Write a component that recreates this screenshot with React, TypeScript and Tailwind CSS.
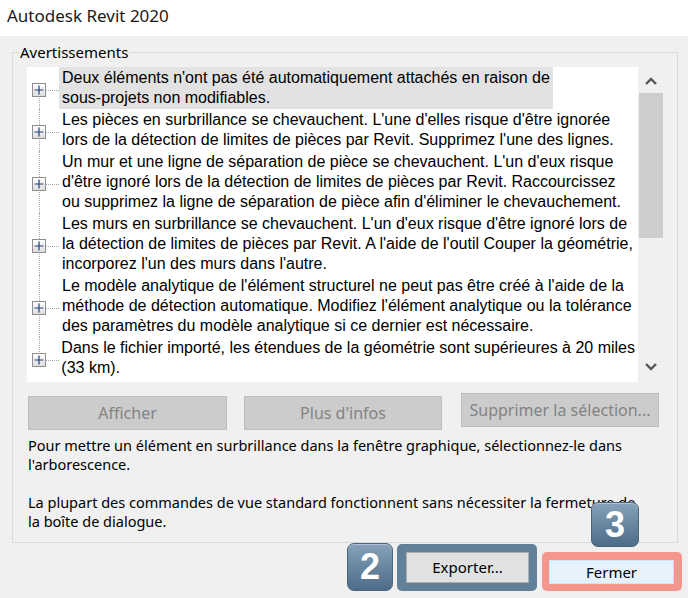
import React from 'react';

const warnings: string[][] = [
  ["Deux éléments n'ont pas été automatiquement attachés en raison de", 'sous-projets non modifiables.'],
  [
    "Les pièces en surbrillance se chevauchent. L'une d'elles risque d'être ignorée",
    "lors de la détection de limites de pièces par Revit. Supprimez l'une des lignes.",
  ],
  [
    "Un mur et une ligne de séparation de pièce se chevauchent. L'un d'eux risque",
    "d'être ignoré lors de la détection de limites de pièces par Revit. Raccourcissez",
    "ou supprimez la ligne de séparation de pièce afin d'éliminer le chevauchement.",
  ],
  [
    "Les murs en surbrillance se chevauchent. L'un d'eux risque d'être ignoré lors de",
    "la détection de limites de pièces par Revit. A l'aide de l'outil Couper la géométrie,",
    "incorporez l'un des murs dans l'autre.",
  ],
  [
    "Le modèle analytique de l'élément structurel ne peut pas être créé à l'aide de la",
    "méthode de détection automatique. Modifiez l'élément analytique ou la tolérance",
    'des paramètres du modèle analytique si ce dernier est nécessaire.',
  ],
  ['Dans le fichier importé, les étendues de la géométrie sont supérieures à 20 miles', '(33 km).'],
];

const ui = { fontFamily: '"Noto Sans", "Open Sans", sans-serif' };
const arial = { fontFamily: '"Liberation Sans", Arial, sans-serif' };

const PlusBox = () => (
  <div className="relative z-10 w-[14px] h-[14px] border border-[#8e8e8e] bg-gradient-to-b from-white to-[#dedede] flex items-center justify-center">
    <svg width="10" height="10" viewBox="0 0 10 10">
      <path d="M0.5 5H9.5M5 0.5V9.5" stroke="#22407a" strokeWidth="1.2" />
    </svg>
  </div>
);

const Chevron = ({ up }: { up?: boolean }) => (
  <svg width="12" height="8" viewBox="0 0 12 8">
    <path d={up ? 'M1 7L6 2L11 7' : 'M1 1L6 6L11 1'} fill="none" stroke="#555555" strokeWidth="2.4" />
  </svg>
);

const Badge = ({ n, className }: { n: string; className: string }) => (
  <div
    className={`absolute rounded-[7px] border border-[#4a657c] bg-gradient-to-b from-[#86a2bb] to-[#4d6c87] flex items-center justify-center text-white font-bold text-[36px] leading-none shadow-[inset_0_1px_0_rgba(255,255,255,0.35)] ${className}`}
    style={arial}
  >
    {n}
  </div>
);

export default function App() {
  return (
    <div className="relative w-[688px] h-[598px] overflow-hidden bg-[#f0f0f0] text-black">
      {/* title bar */}
      <div className="h-[36px] bg-white pl-[7px] pt-[3px] text-[17px] text-[#1a1a1a]" style={ui}>
        Autodesk Revit 2020
      </div>

      <fieldset className="ml-[12px] mt-[6px] w-[666px] h-[501px] border border-[#dadada] pl-[6px]">
        <legend className="px-[1px] text-[15px] leading-[20px]" style={ui}>
          Avertissements
        </legend>

        <div className="ml-[8px] mt-[5px]">
          {/* tree list */}
          <div className="flex w-[637px] h-[315px]">
            <div className="w-[611px] bg-white overflow-hidden text-[16px] leading-[20px]" style={arial}>
              {warnings.map((lines, i) => (
                <div key={i} className="relative flex">
                  <div className="relative w-[32px] flex items-center pl-[5px] pt-[4px]">
                    <div
                      className={`absolute left-[12px] border-l border-dotted border-[#a8a8a8] ${
                        i === 0 ? 'top-1/2 bottom-0' : i === warnings.length - 1 ? 'top-0 bottom-1/2' : 'top-0 bottom-0'
                      }`}
                    />
                    <div className="absolute left-[19px] w-[13px] top-[calc(50%+2px)] border-t border-dotted border-[#a8a8a8]" />
                    <PlusBox />
                  </div>
                  <div className={`w-fit px-[3px] py-[1px] ${i === 0 ? 'bg-[#e2e2e2]' : ''}`}>
                    {lines.map((l, j) => (
                      <div key={j} className="whitespace-nowrap">
                        {l}
                      </div>
                    ))}
                  </div>
                </div>
              ))}
            </div>
            <div className="w-[26px] flex flex-col">
              <div className="h-[26px] flex items-center justify-center pt-[2px]">
                <Chevron up />
              </div>
              <div className="mx-[1px] h-[145px] bg-[#cdcdcd]" />
              <div className="flex-1" />
              <div className="h-[26px] flex items-center justify-center pb-[4px]">
                <Chevron />
              </div>
            </div>
          </div>

          {/* buttons */}
          <div className="mt-[11px] flex items-start text-[16px] text-[#838383]" style={ui}>
            <div className="ml-[1px] mt-[3px] w-[199px] h-[34px] bg-[#cccccc] border border-[#bfbfbf] flex items-center justify-center">
              Afficher
            </div>
            <div className="ml-[17px] mt-[3px] w-[198px] h-[34px] bg-[#cccccc] border border-[#bfbfbf] flex items-center justify-center">
              Plus d'infos
            </div>
            <div className="ml-[19px] w-[198px] h-[34px] bg-[#cccccc] border border-[#bfbfbf] flex items-center justify-center">
              Supprimer la sélection...
            </div>
          </div>

          {/* help text */}
          <div className="mt-[6px] ml-[1px] text-[14.5px] leading-[19px] whitespace-nowrap" style={ui}>
            <div>Pour mettre un élément en surbrillance dans la fenêtre graphique, sélectionnez-le dans</div>
            <div>l'arborescence.</div>
            <div className="h-[19px]" />
            <div>La plupart des commandes de vue standard fonctionnent sans nécessiter la fermeture de</div>
            <div>la boîte de dialogue.</div>
          </div>
        </div>
      </fieldset>

      {/* bottom buttons */}
      <div className="h-[55px] flex justify-end items-end gap-[5px] pr-[6px] pb-[7px] text-[15px]" style={ui}>
        <div className="w-[140px] h-[47px] rounded-[5px] bg-[#61809a] pl-[9px] pr-[8px] py-[8px]">
          <div className="h-full bg-[#e1e1e1] border border-[#adadad] flex items-center justify-center">Exporter...</div>
        </div>
        <div className="w-[140px] h-[39px] rounded-[5px] bg-[#f4968c] pl-[7px] pr-[8px] pt-[8px] pb-[7px]">
          <div className="h-full bg-[#e5f1fb] border border-[#cce4f7] flex items-center justify-center">Fermer</div>
        </div>
      </div>

      <Badge n="2" className="left-[347px] top-[543px] w-[46px] h-[48px]" />
      <Badge n="3" className="left-[591px] top-[502px] w-[48px] h-[45px]" />
    </div>
  );
}
